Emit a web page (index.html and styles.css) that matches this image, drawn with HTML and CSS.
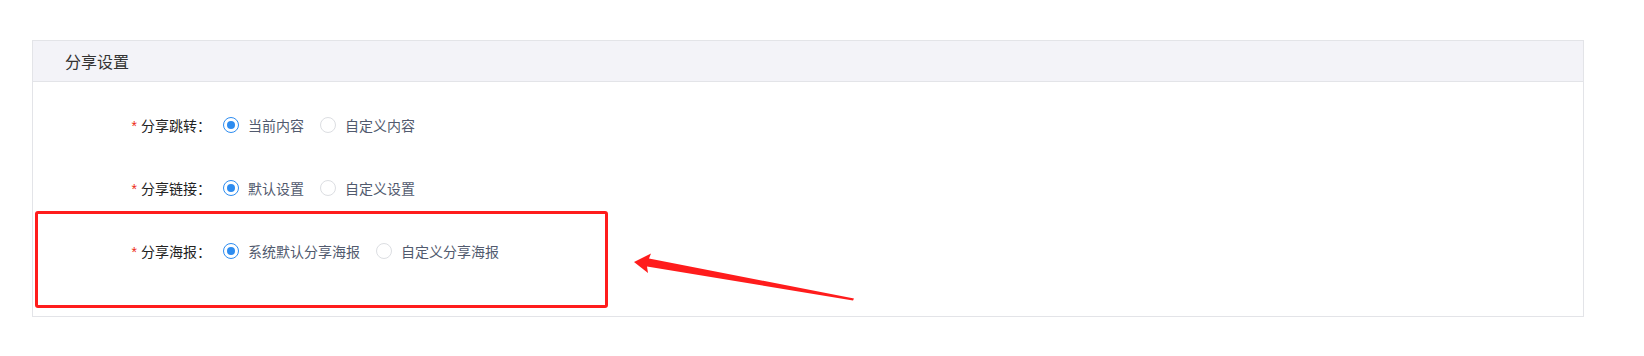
FILE: index.html
```html
<!DOCTYPE html>
<html lang="zh-CN">
<head>
<meta charset="utf-8">
<title>分享设置</title>
<link rel="stylesheet" href="styles.css">
</head>
<body>
<div class="page">
  <section class="card">
    <div class="card-head">分享设置</div>
    <div class="card-body">
      <div class="form-row">
        <label class="form-label"><span class="req">*</span>分享跳转：</label>
        <div class="radio-group">
          <span class="radio checked"><span class="radio-inner"></span><span class="radio-text">当前内容</span></span>
          <span class="radio"><span class="radio-inner"></span><span class="radio-text">自定义内容</span></span>
        </div>
      </div>
      <div class="form-row">
        <label class="form-label"><span class="req">*</span>分享链接：</label>
        <div class="radio-group">
          <span class="radio checked"><span class="radio-inner"></span><span class="radio-text">默认设置</span></span>
          <span class="radio"><span class="radio-inner"></span><span class="radio-text">自定义设置</span></span>
        </div>
      </div>
      <div class="form-row">
        <label class="form-label"><span class="req">*</span>分享海报：</label>
        <div class="radio-group">
          <span class="radio checked"><span class="radio-inner"></span><span class="radio-text">系统默认分享海报</span></span>
          <span class="radio"><span class="radio-inner"></span><span class="radio-text">自定义分享海报</span></span>
        </div>
      </div>
    </div>
  </section>
  <div class="highlight-box"></div>
  <svg class="arrow" width="1644" height="356" viewBox="0 0 1644 356" xmlns="http://www.w3.org/2000/svg">
    <polygon points="634,262 651,253.5 649,258.5 854,298.5 853,300.5 647,266.5 648,273" fill="#ff1c1c"/>
  </svg>
</div>
</body>
</html>
```

FILE: styles.css
```css
html, body {
  margin: 0;
  padding: 0;
  background: #ffffff;
}

.page {
  position: relative;
  width: 1644px;
  height: 356px;
  padding-top: 40px;
  box-sizing: border-box;
  font-family: "Microsoft YaHei", "Noto Sans CJK SC", "Noto Sans", sans-serif;
  font-size: 14px;
  color: #333333;
}

.card {
  margin-left: 32px;
  width: 1552px;
  border: 1px solid #e3e4e8;
  box-sizing: border-box;
  background: #ffffff;
}

.card-head {
  height: 40px;
  line-height: 40px;
  padding-left: 32px;
  background: #f3f3f8;
  border-bottom: 1px solid #e3e4e8;
  font-size: 16px;
  color: #333333;
}

.card-body {
  display: flex;
  flex-direction: column;
  gap: 31px;
  padding: 27px 0 49px 0;
}

.form-row {
  display: flex;
  align-items: center;
  height: 32px;
}

.form-label {
  width: 190px;
  padding-right: 12px;
  box-sizing: border-box;
  text-align: right;
  color: #222222;
  font-size: 14px;
}

.req {
  color: #ed2a14;
  margin-right: 4px;
  font-family: "Liberation Sans", sans-serif;
}

.radio-group {
  display: flex;
  align-items: center;
}

.radio {
  display: inline-flex;
  align-items: center;
  margin-right: 16px;
}

.radio-inner {
  width: 16px;
  height: 16px;
  box-sizing: border-box;
  border: 1px solid #dcdee2;
  border-radius: 50%;
  margin-right: 9px;
  display: flex;
  align-items: center;
  justify-content: center;
  background: #ffffff;
}

.radio.checked .radio-inner {
  border-color: #2d8cf0;
}

.radio.checked .radio-inner::after {
  content: "";
  width: 8px;
  height: 8px;
  border-radius: 50%;
  background: #2d8cf0;
}

.radio-text {
  color: #515a6e;
  font-size: 14px;
}

.highlight-box {
  position: absolute;
  left: 35px;
  top: 211px;
  width: 573px;
  height: 97px;
  box-sizing: border-box;
  border: 3px solid #ff1c1c;
  border-radius: 3px;
}

.arrow {
  position: absolute;
  left: 0;
  top: 0;
  pointer-events: none;
}
```
